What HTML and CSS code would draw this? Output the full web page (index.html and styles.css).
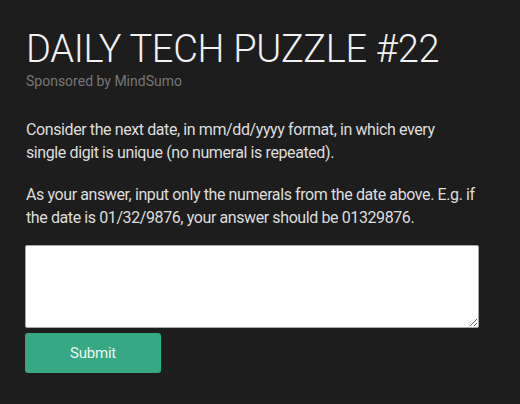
FILE: index.html
```html
<!DOCTYPE html>
<html>
<head>
<meta charset="utf-8">
<link rel="stylesheet" href="styles.css">
</head>
<body>
<main class="puzzle">
  <header class="puzzle-head">
    <h1 class="puzzle-title">DAILY TECH PUZZLE #22</h1>
    <p class="puzzle-sponsor">Sponsored by MindSumo</p>
  </header>
  <p class="puzzle-text">Consider the next date, in mm/dd/yyyy format, in which every single digit is unique (no numeral is repeated).</p>
  <p class="puzzle-text">As your answer, input only the numerals from the date above. E.g. if the date is 01/32/9876, your answer should be 01329876.</p>
  <form class="puzzle-form">
    <textarea class="puzzle-answer"></textarea>
    <button type="button" class="puzzle-submit">Submit</button>
  </form>
</main>
</body>
</html>
```
FILE: styles.css
```css
html, body {
  margin: 0;
  padding: 0;
  background: #1d1d1d;
}
body {
  width: 520px;
  height: 404px;
  overflow: hidden;
  font-family: "Roboto", "Open Sans", sans-serif;
}
.puzzle {
  display: flex;
  flex-direction: column;
  padding: 26px 0 0 25px;
  width: 454px;
}
.puzzle-head {
  display: flex;
  flex-direction: column;
}
.puzzle-title {
  margin: 0;
  padding-left: 1px;
  font-weight: 300;
  font-size: 38px;
  line-height: 46px;
  color: #f2f2f2;
  letter-spacing: -0.3px;
}
.puzzle-sponsor {
  margin: 1px 0 0 1px;
  font-size: 14px;
  line-height: 16px;
  color: #777777;
}
.puzzle-text {
  box-sizing: border-box;
  width: 451px;
  margin: 30px 0 0;
  padding-left: 1px;
  font-size: 16px;
  line-height: 22.5px;
  letter-spacing: -0.4px;
  color: #dedede;
}
.puzzle-text + .puzzle-text {
  margin-top: 20px;
}
.puzzle-form {
  display: flex;
  flex-direction: column;
  align-items: flex-start;
  gap: 5px;
  margin-top: 16px;
}
.puzzle-answer {
  box-sizing: border-box;
  width: 454px;
  height: 83px;
  margin: 0;
  border: 1px solid #a9a9a9;
  border-radius: 2px;
  background: #fff;
}
.puzzle-submit {
  width: 136px;
  height: 40px;
  border: 0;
  border-radius: 3px;
  background: #36a884;
  color: #eef7f2;
  font-family: "Roboto", sans-serif;
  font-size: 15px;
  letter-spacing: -0.2px;
}
```
